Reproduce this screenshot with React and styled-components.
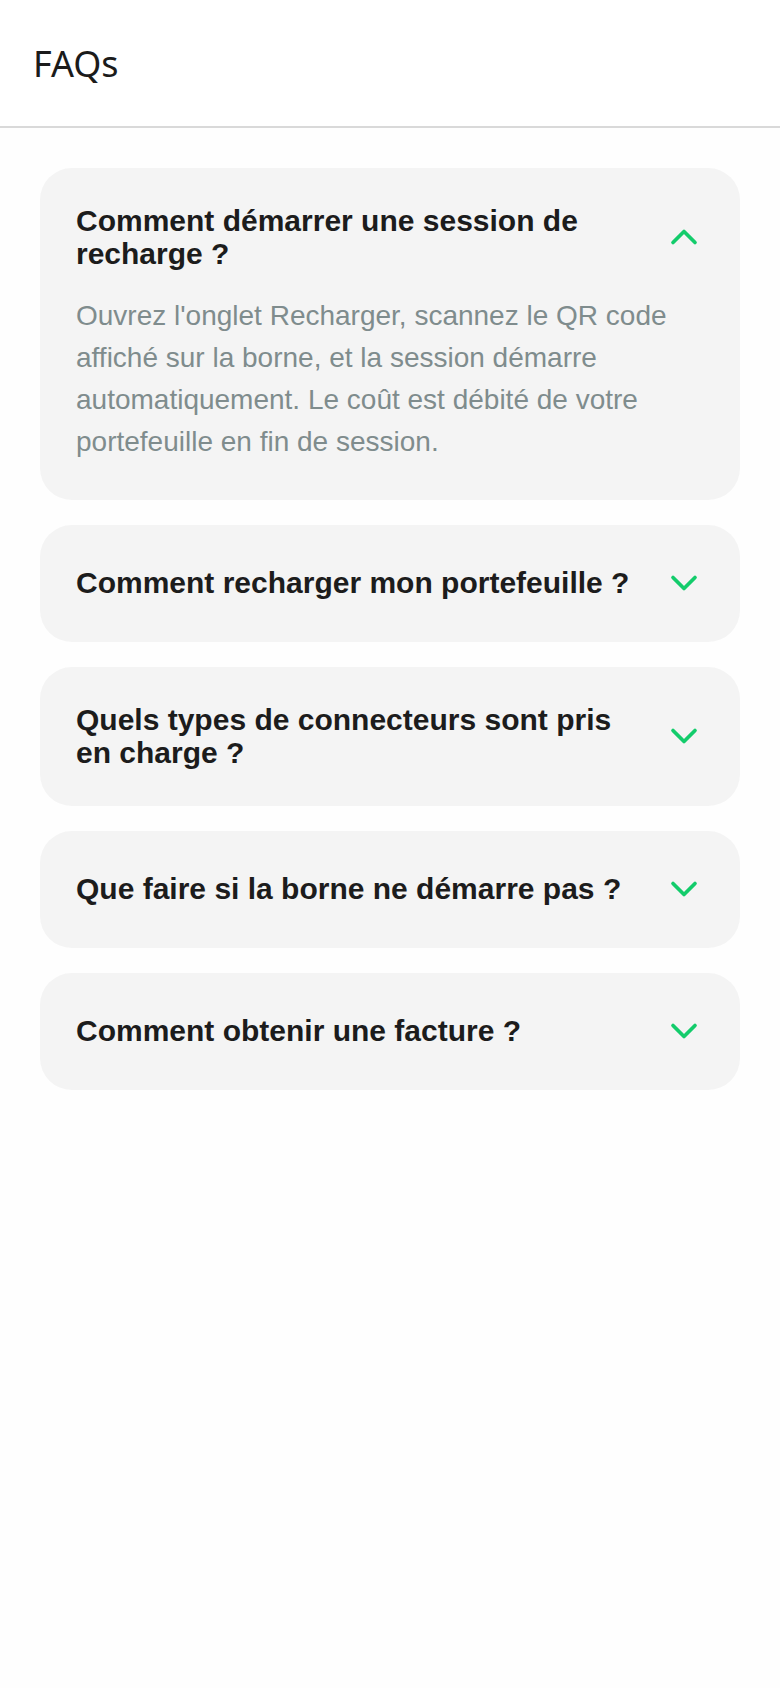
import { useState } from 'react'
import styled, { createGlobalStyle } from 'styled-components'
import { ChevronDown, ChevronUp } from 'lucide-react'

const faqs = [
    {
        q: 'Comment démarrer une session de recharge ?',
        a: "Ouvrez l'onglet Recharger, scannez le QR code affiché sur la borne, et la session démarre automatiquement. Le coût est débité de votre portefeuille en fin de session.",
    },
    {
        q: 'Comment recharger mon portefeuille ?',
        a: 'Depuis l’onglet Portefeuille, choisissez un montant puis validez le paiement par carte.',
    },
    {
        q: 'Quels types de connecteurs sont pris en charge ?',
        a: 'Nos bornes acceptent les connecteurs Type 2, CCS Combo et CHAdeMO.',
    },
    {
        q: 'Que faire si la borne ne démarre pas ?',
        a: 'Vérifiez que le câble est bien branché, puis contactez le support depuis l’application.',
    },
    {
        q: 'Comment obtenir une facture ?',
        a: 'Vos factures sont disponibles dans l’historique des sessions, au format PDF.',
    },
]

const Global = createGlobalStyle`
    body {
        margin: 0;
        background: #fefefe;
        font-family: 'Liberation Sans', Arial, sans-serif;
    }
`

const FaqPage = () => {
    const [open, setOpen] = useState(0)

    return (
        <>
            <Global />
            <Header>
                <Title>FAQs</Title>
            </Header>
            <List>
                {faqs.map((item, i) => (
                    <Card key={item.q}>
                        <Row onClick={() => setOpen(open === i ? -1 : i)}>
                            <Question>{item.q}</Question>
                            <Icon>
                                {open === i
                                    ? <ChevronUp size={44} strokeWidth={2} />
                                    : <ChevronDown size={44} strokeWidth={2} />}
                            </Icon>
                        </Row>
                        {open === i && <Answer>{item.a}</Answer>}
                    </Card>
                ))}
            </List>
        </>
    )
}

const Header = styled.header`
    height: 128px;
    display: flex;
    align-items: center;
    padding: 0 33px;
    box-sizing: border-box;
    background: #ffffff;
    border-bottom: 2px solid #d9d9d9;
`

const Title = styled.h1`
    margin: 0;
    font-family: 'Noto Sans', 'Open Sans', sans-serif;
    font-weight: 400;
    font-size: 36px;
    color: #1b1b1b;
`

const List = styled.main`
    display: flex;
    flex-direction: column;
    gap: 25px;
    padding: 40px 40px;
`

const Card = styled.section`
    background: #f4f4f4;
    border-radius: 32px;
    padding: 36px 34px 37px 36px;
`

const Row = styled.div`
    display: flex;
    align-items: center;
    justify-content: space-between;
    gap: 18px;
    cursor: pointer;
`

const Question = styled.h3`
    margin: 0;
    flex: 1;
    font-family: 'Liberation Sans', Arial, sans-serif;
    font-weight: 700;
    font-size: 30px;
    line-height: 1.1;
    color: #1c1c1c;
`

const Icon = styled.span`
    display: flex;
    flex-shrink: 0;
    width: 44px;
    height: 44px;
    color: #13cc6b;
`

const Answer = styled.p`
    margin: 24.5px 0 0;
    font-family: 'Liberation Sans', Arial, sans-serif;
    font-size: 28px;
    line-height: 1.5;
    color: #7f8c8d;
`

export default FaqPage
